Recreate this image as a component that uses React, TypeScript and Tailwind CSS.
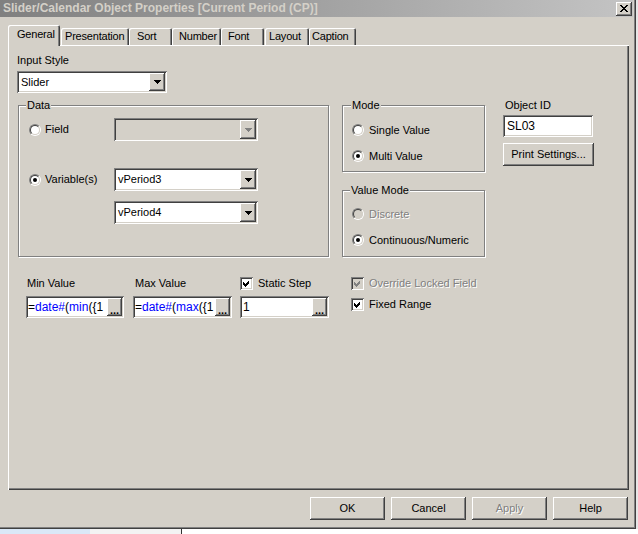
import type { ReactNode } from "react";

const raised =
  "bg-[#d4d0c8] shadow-[inset_-1px_-1px_#404040,inset_1px_1px_#fff,inset_-2px_-2px_#808080,inset_2px_2px_#d4d0c8]";
const sunken =
  "shadow-[inset_1px_1px_#808080,inset_-1px_-1px_#fff,inset_2px_2px_#404040,inset_-2px_-2px_#d4d0c8]";
const disabledText = "text-[#808080] [text-shadow:1px_1px_0_#fff]";

const Radio = ({ checked, disabled }: { checked?: boolean; disabled?: boolean }) => (
  <div className="w-[12px] h-[12px] rounded-full border border-t-[#808080] border-l-[#808080] border-b-white border-r-white shrink-0">
    <div
      className={`w-full h-full rounded-full border border-t-[#404040] border-l-[#404040] border-b-[#d4d0c8] border-r-[#d4d0c8] flex items-center justify-center ${
        disabled ? "bg-[#d4d0c8]" : "bg-white"
      }`}
    >
      {checked && <div className="w-[4px] h-[4px] rounded-full bg-black" />}
    </div>
  </div>
);

const Check = ({ checked, disabled }: { checked?: boolean; disabled?: boolean }) => (
  <div
    className={`w-[13px] h-[13px] shrink-0 flex items-center justify-center ${sunken} ${
      disabled ? "bg-[#d4d0c8]" : "bg-white"
    }`}
  >
    {checked && (
      <svg width="7" height="7" viewBox="0 0 7 7" shapeRendering="crispEdges">
        <polygon points="0,2 2,4 6,0 6,3 2,7 0,5" fill={disabled ? "#808080" : "#000"} />
      </svg>
    )}
  </div>
);

const Arrow = ({ disabled }: { disabled?: boolean }) => (
  <svg width="7" height="4" viewBox="0 0 7 4" shapeRendering="crispEdges">
    <polygon points="0,0 7,0 3.5,4" fill={disabled ? "#808080" : "#000"} />
  </svg>
);

const Combo = ({
  value,
  w,
  h = "h-[23px]",
  disabled,
}: {
  value?: string;
  w: string;
  h?: string;
  disabled?: boolean;
}) => (
  <div className={`${w} ${h} ${sunken} ${disabled ? "bg-[#d4d0c8]" : "bg-white"} flex p-[2px] shrink-0`}>
    <div className="flex-1 flex items-center pl-[2px] leading-[13px]">{value}</div>
    <div className={`w-[16px] h-full flex items-center justify-center ${raised}`}>
      <Arrow disabled={disabled} />
    </div>
  </div>
);

const Edit = ({ w, children }: { w: string; children: ReactNode }) => (
  <div className={`${w} h-[22px] ${sunken} bg-white flex p-[2px] shrink-0`}>
    <div className="flex-1 overflow-hidden whitespace-nowrap flex items-center leading-[13px] text-[12px]">
      {children}
    </div>
    <div className={`w-[15px] h-full ${raised} flex items-end justify-center pb-[1px] leading-[9px] font-bold`}>
      ...
    </div>
  </div>
);

const Button = ({ label, w = "w-[75px]", disabled }: { label: string; w?: string; disabled?: boolean }) => (
  <div className={`${w} h-[23px] ${raised} flex items-center justify-center ${disabled ? disabledText : ""}`}>
    {label}
  </div>
);

const Group = ({
  label,
  w,
  h,
  lx = "left-[8px]",
  children,
}: {
  label: string;
  w: string;
  h: string;
  lx?: string;
  children: ReactNode;
}) => (
  <div className="relative pt-[6px]">
    <div className={`${w} ${h} border border-[#808080] shadow-[1px_1px_0_#fff,inset_1px_1px_0_#fff]`}>
      {children}
    </div>
    <span className={`absolute top-0 ${lx} px-[1px] bg-[#d4d0c8] leading-[13px]`}>{label}</span>
  </div>
);

const tabs = [
  { name: "General", w: "w-[52px]", pl: "pl-[9px]" },
  { name: "Presentation", w: "w-[68px] ml-[1px]", pl: "pl-[4px]" },
  { name: "Sort", w: "w-[43px]", pl: "pl-[8px]" },
  { name: "Number", w: "w-[49px]", pl: "pl-[7px]" },
  { name: "Font", w: "w-[43px]", pl: "pl-[7px]" },
  { name: "Layout", w: "w-[44px] ml-[1px]", pl: "pl-[4px]" },
  { name: "Caption", w: "w-[47px]", pl: "pl-[3px]" },
];

export default function App() {
  return (
    <div className="w-[638px] h-[534px] bg-[#e6e6e6] flex flex-col overflow-hidden font-['Liberation_Sans',Arial,sans-serif] text-[11px] text-black leading-[13px]">
      {/* dialog window */}
      <div className="w-[636px] h-[529px] bg-[#d4d0c8] flex flex-col shadow-[inset_-1px_-1px_#404040,inset_-2px_-2px_#808080]">
        {/* title bar */}
        <div className="h-[17px] mr-[3px] flex items-center justify-between bg-linear-to-r from-[#808080] to-[#c4c4c4] pl-[3px]">
          <span className="font-bold text-[12px] text-[#d4d0c8] whitespace-nowrap">
            Slider/Calendar Object Properties [Current Period (CP)]
          </span>
          <div className={`w-[16px] h-[14px] mr-[1px] ${raised} flex items-center justify-center`}>
            <svg width="8" height="7" viewBox="0 0 8 7" shapeRendering="crispEdges">
              <path d="M0 0h2v1h-2zM6 0h2v1h-2zM1 1h2v1h-2zM5 1h2v1h-2zM2 2h4v1h-4zM3 3h2v1h-2zM2 4h4v1h-4zM1 5h2v1h-2zM5 5h2v1h-2zM0 6h2v1h-2zM6 6h2v1h-2z" fill="#000" />
            </svg>
          </div>
        </div>

        {/* tabs */}
        <div className="mt-[8px] pl-[8px] flex items-end h-[21px] relative z-10 tracking-[-0.2px]">
          {tabs.map((t, i) =>
            i === 0 ? (
              <div
                key={t.name}
                className={`${t.w} ${t.pl} h-[21px] pt-[3px] bg-[#d4d0c8] rounded-t-[2px] shadow-[inset_1px_1px_#fff,inset_-1px_0_#404040,inset_-2px_0_#808080]`}
              >
                {t.name}
              </div>
            ) : (
              <div
                key={t.name}
                className={`${t.w} ${t.pl} h-[17px] mb-[1px] pt-[2px] rounded-t-[2px] shadow-[inset_1px_1px_#fff,inset_-1px_0_#404040,inset_-2px_0_#808080]`}
              >
                {t.name}
              </div>
            )
          )}
        </div>

        {/* tab panel */}
        <div className="-mt-[1px] ml-[8px] w-[621px] h-[445px] shadow-[inset_1px_1px_#fff,inset_-1px_-1px_#404040,inset_-2px_-2px_#808080] pt-[9px] pl-[9px] flex flex-col">
          <div>Input Style</div>
          <div className="mt-[4px]">
            <Combo value="Slider" w="w-[150px]" h="h-[22px]" />
          </div>

          <div className="mt-[6px] flex items-start">
            {/* Data */}
            <div className="ml-[1px]">
              <Group label="Data" w="w-[311px]" h="h-[152px]">
                <div className="mt-[12px] flex items-center h-[23px]">
                  <div className="w-[95px] pl-[10px] flex items-center gap-[4px]">
                    <Radio />
                    <span>Field</span>
                  </div>
                  <Combo w="w-[144px]" disabled />
                </div>
                <div className="mt-[27px] flex items-center h-[23px]">
                  <div className="w-[95px] pl-[10px] flex items-center gap-[4px]">
                    <Radio checked />
                    <span>Variable(s)</span>
                  </div>
                  <Combo value="vPeriod3" w="w-[144px]" />
                </div>
                <div className="mt-[10px] pl-[95px]">
                  <Combo value="vPeriod4" w="w-[144px]" />
                </div>
              </Group>
            </div>

            {/* Mode / Value Mode */}
            <div className="ml-[13px] flex flex-col">
              <Group label="Mode" w="w-[143px]" h="h-[67px]" lx="left-[9px]">
                <div className="mt-[16px] h-[16px] pl-[9px] flex items-center gap-[5px]">
                  <Radio />
                  <span>Single Value</span>
                </div>
                <div className="mt-[10px] h-[16px] pl-[9px] flex items-center gap-[5px]">
                  <Radio checked />
                  <span>Multi Value</span>
                </div>
              </Group>
              <div className="mt-[12px]">
                <Group label="Value Mode" w="w-[143px]" h="h-[67px]">
                  <div className="mt-[15px] h-[16px] pl-[9px] flex items-center gap-[5px]">
                    <Radio disabled />
                    <span className={disabledText}>Discrete</span>
                  </div>
                  <div className="mt-[10px] h-[16px] pl-[9px] flex items-center gap-[5px]">
                    <Radio checked />
                    <span>Continuous/Numeric</span>
                  </div>
                </Group>
              </div>
            </div>

            {/* Object ID */}
            <div className="ml-[18px] flex flex-col">
              <div className="pl-[2px]">Object ID</div>
              <div className={`mt-[3px] w-[90px] h-[22px] ${sunken} bg-white flex items-center pl-[4px] text-[12px]`}>
                SL03
              </div>
              <div className="mt-[6px]">
                <Button label="Print Settings..." w="w-[91px]" />
              </div>
            </div>
          </div>

          {/* min / max / step */}
          <div className="mt-[20px] flex items-start">
            <div className="ml-[9px] flex flex-col">
              <div className="flex h-[13px] items-center">
                <div className="w-[98px] pl-[1px]">Min Value</div>
                <div className="w-[99px] ml-[9px] pl-[2px]">Max Value</div>
                <div className="ml-[8px] flex items-center gap-[5px]">
                  <Check checked />
                  <span>Static Step</span>
                </div>
              </div>
              <div className="mt-[6px] flex">
                <Edit w="w-[98px]">
                  <span>=</span>
                  <span className="text-[#0000ff]">date#</span>
                  <span>(</span>
                  <span className="text-[#0000ff]">min</span>
                  <span>({"{"}1</span>
                </Edit>
                <div className="ml-[9px]">
                  <Edit w="w-[99px]">
                    <span>=</span>
                    <span className="text-[#0000ff]">date#</span>
                    <span>(</span>
                    <span className="text-[#0000ff]">max</span>
                    <span>({"{"}1</span>
                  </Edit>
                </div>
                <div className="ml-[8px]">
                  <Edit w="w-[89px]">
                    <span className="pl-[1px]">1</span>
                  </Edit>
                </div>
              </div>
            </div>

            <div className="ml-[22px] flex flex-col">
              <div className="h-[13px] flex items-center gap-[5px]">
                <Check checked disabled />
                <span className={disabledText}>Override Locked Field</span>
              </div>
              <div className="mt-[8px] h-[13px] flex items-center gap-[5px]">
                <Check checked />
                <span>Fixed Range</span>
              </div>
            </div>
          </div>
        </div>

        {/* buttons */}
        <div className="mt-[7px] pr-[8px] flex justify-end gap-[6px]">
          <Button label="OK" />
          <Button label="Cancel" />
          <Button label="Apply" disabled />
          <Button label="Help" />
        </div>
      </div>

      {/* desktop strip below the window */}
      <div className="flex h-[5px]">
        <div className="w-[90px] bg-[#dae8f7]" />
        <div className="w-[91px] bg-[#f3f3f3]" />
        <div className="w-[1px] bg-[#333]" />
        <div className="flex-1 bg-white" />
      </div>
    </div>
  );
}
